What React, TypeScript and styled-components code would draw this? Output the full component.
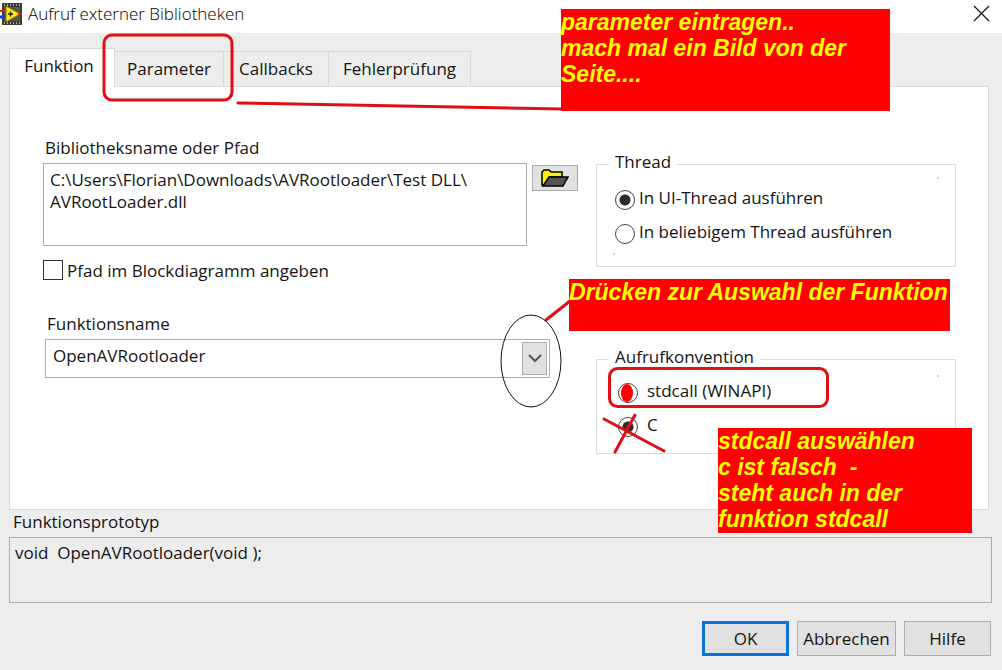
import React from 'react';
import styled, { createGlobalStyle } from 'styled-components';

const Global = createGlobalStyle`
  *, *::before, *::after { box-sizing: border-box; }
  body { margin: 0; background: #ededed; }
  body, button, input, select, textarea {
    font-family: 'Open Sans', 'Noto Sans', sans-serif;
    font-size: 17px;
    line-height: 22px;
    color: #141414;
  }
`;

const Dialog = styled.main`
  position: relative;
  min-height: 100vh;
  background: #ededed;
`;

const TitleBar = styled.header`
  display: flex;
  align-items: center;
  gap: 6px;
  height: 33px;
  padding: 0 12px 6px 0;
  background: #fff;
`;

const Title = styled.h1`
  flex: 1;
  margin: 0;
  font-size: 17px;
  font-weight: 300;
  color: #000;
`;

const CloseButton = styled.button`
  display: flex;
  padding: 0;
  border: 0;
  background: none;
`;

const Body = styled.div`
  padding: 15px 10px 0 9px;
`;

const TabList = styled.div`
  display: flex;
  align-items: flex-end;
  height: 38px;
`;

const Tab = styled.button<{ $active?: boolean; $width: number }>`
  position: relative;
  width: ${p => p.$width}px;
  height: ${p => (p.$active ? 39 : 35)}px;
  margin-bottom: ${p => (p.$active ? -1 : 0)}px;
  padding: ${p => (p.$active ? '0 6px 4px 0' : '0')};
  border: 1px solid #d9d9d9;
  border-bottom: 0;
  border-left-width: ${p => (p.$active ? 1 : 0)}px;
  background: ${p => (p.$active ? '#fff' : '#ededed')};
  white-space: nowrap;
  z-index: ${p => (p.$active ? 1 : 0)};
`;

const Panel = styled.section`
  display: grid;
  grid-template-columns: 543px minmax(0, 360px);
  column-gap: 10px;
  min-height: 424px;
  margin-right: 3px;
  padding: 49px 32px 54px 33px;
  border: 1px solid #d9d9d9;
  background: #fff;
`;

const LeftColumn = styled.div`
  display: flex;
  flex-direction: column;
`;

const RightColumn = styled.div`
  display: flex;
  flex-direction: column;
  gap: 79px;
  padding-top: 15px;
`;

const Label = styled.label`
  display: block;
  padding: 1px 2px;
  margin-bottom: 3px;
`;

const PathRow = styled.div`
  display: flex;
  align-items: flex-start;
  gap: 5px;
`;

const PathBox = styled.textarea`
  display: block;
  width: 484px;
  height: 83px;
  padding: 5px 6px;
  border: 1px solid #acacac;
  border-radius: 0;
  background: #fff;
  resize: none;
  overflow: hidden;
  outline: none;
`;

const BrowseButton = styled.button`
  display: flex;
  align-items: center;
  justify-content: center;
  width: 46px;
  height: 26px;
  margin-top: 2px;
  padding: 0;
  border: 1px solid #acacac;
  background: #e1e1e1;
`;

const CheckRow = styled.label`
  display: flex;
  align-items: center;
  gap: 4px;
  height: 24px;
  margin-top: 13px;
`;

const CheckBox = styled.input`
  appearance: none;
  width: 20px;
  height: 20px;
  margin: 0 0 2px;
  border: 1px solid #333;
  background: #fff;
`;

const FunctionField = styled.div`
  margin: 29px 0 0 2px;
`;

const SelectFrame = styled.div`
  display: grid;
  width: 505px;
  height: 39px;
  align-items: center;
  border: 1px solid #acacac;

  & > * { grid-area: 1 / 1; }
`;

const Select = styled.select`
  appearance: none;
  width: 100%;
  height: 37px;
  padding: 0 32px 6px 7px;
  border: 0;
  background: #fff;
  outline: none;
`;

const Arrow = styled.span`
  display: flex;
  align-items: center;
  justify-content: center;
  justify-self: end;
  width: 25px;
  height: 33px;
  margin-right: 2px;
  border: 1px solid #acacac;
  background: #e1e1e1;
  pointer-events: none;
`;

const Group = styled.fieldset<{ $height: number; $inset: number; $top: number }>`
  min-width: 0;
  height: ${p => p.$height}px;
  margin: 0;
  padding: ${p => p.$top}px 0 0 ${p => p.$inset}px;
  border: 1px solid #dcdcdc;

  legend {
    margin-left: ${p => 12 - p.$inset}px;
    padding: 0 6px 4px;
  }
`;

const RadioRow = styled.label<{ $gap: number }>`
  display: flex;
  align-items: center;
  gap: ${p => p.$gap}px;
  height: 24px;
  margin-bottom: 10px;
`;

const Radio = styled.input`
  appearance: none;
  width: 20px;
  height: 20px;
  margin: 3px 0 0;
  border: 1px solid #444;
  border-radius: 50%;
  background: #fff;

  &:checked { background: radial-gradient(circle, #2c2c2c 5px, #fff 6px); }
`;

const Prototype = styled.div`
  label { margin-bottom: 3px; padding: 1px 4px; }
`;

const PrototypeBox = styled.textarea`
  display: block;
  width: 100%;
  height: 66px;
  padding: 4px 5px;
  border: 1px solid #acacac;
  border-radius: 0;
  background: #ededed;
  resize: none;
  outline: none;
`;

const Footer = styled.footer`
  display: flex;
  justify-content: flex-end;
  gap: 8px;
  padding: 18px 1px 14px 0;
`;

const PushButton = styled.button<{ $primary?: boolean; $width: number }>`
  width: ${p => p.$width}px;
  height: 35px;
  padding: 0;
  border: ${p => (p.$primary ? '3px solid #0a74d6' : '1px solid #acacac')};
  background: #e1e1e1;
  white-space: nowrap;
`;

const Ink = styled.svg`
  position: absolute;
  top: 0;
  left: 0;
  z-index: 2;
  pointer-events: none;
`;

const Note = styled.p<{ $x: number; $y: number; $w: number; $h: number }>`
  position: absolute;
  left: ${p => p.$x}px;
  top: ${p => p.$y}px;
  z-index: 3;
  width: ${p => p.$w}px;
  height: ${p => p.$h}px;
  margin: 0;
  background: #f00;
  color: #ff0;
  font: italic bold 23px/26px 'Liberation Sans', Arial, sans-serif;
  white-space: pre;
`;

const AppIcon = () => (
  <svg width="22" height="22" viewBox="0 0 22 22" aria-hidden="true">
    <rect x="2" y="0" width="20" height="22" fill="#3b3d36" />
    <path d="M4 2h17M4 20h17" stroke="#a5a79b" strokeWidth="2" strokeDasharray="1 2" />
    <rect x="4" y="4" width="16" height="14" fill="#55584a" />
    <path d="M6 3v16l14-8z" fill="#ffe81a" stroke="#8a7a00" />
    <path d="M8 11h5M10.500 8.500v5" stroke="#222" strokeWidth="1.500" />
    <path d="M0 8h6" stroke="#e02020" strokeWidth="2" />
    <path d="M0 14h5" stroke="#2038d0" strokeWidth="3" />
    <path d="M18 11h4" stroke="#e02020" strokeWidth="2" />
  </svg>
);

const FolderIcon = () => (
  <svg width="28" height="18" viewBox="0 0 28 18" aria-hidden="true">
    <path d="M1 16V3l2-2h5l2 2h11v5H9l-6 8z" fill="#fff200" stroke="#000" strokeWidth="1.500" />
    <path d="M2 17L8 8h19l-5 9z" fill="#555" stroke="#000" strokeWidth="1.500" />
  </svg>
);

export default function App() {
  return (
    <Dialog>
      <Global />
      <TitleBar>
        <AppIcon />
        <Title>Aufruf externer Bibliotheken</Title>
        <CloseButton aria-label="Schließen">
          <svg width="17" height="17" viewBox="0 0 17 17">
            <path d="M1 1l15 15M16 1L1 16" stroke="#111" strokeWidth="1.200" />
          </svg>
        </CloseButton>
      </TitleBar>

      <Body>
        <TabList role="tablist">
          <Tab role="tab" aria-selected="true" $active $width={106}>Funktion</Tab>
          <Tab role="tab" $width={109}>Parameter</Tab>
          <Tab role="tab" $width={105}>Callbacks</Tab>
          <Tab role="tab" $width={142}>Fehlerprüfung</Tab>
        </TabList>

        <Panel role="tabpanel">
          <LeftColumn>
            <Label htmlFor="path">Bibliotheksname oder Pfad</Label>
            <PathRow>
              <PathBox
                id="path"
                spellCheck={false}
                defaultValue={'C:\\Users\\Florian\\Downloads\\AVRootloader\\Test DLL\\\nAVRootLoader.dll'}
              />
              <BrowseButton aria-label="Durchsuchen"><FolderIcon /></BrowseButton>
            </PathRow>
            <CheckRow>
              <CheckBox type="checkbox" />
              Pfad im Blockdiagramm angeben
            </CheckRow>
            <FunctionField>
              <Label htmlFor="fn">Funktionsname</Label>
              <SelectFrame>
                <Select id="fn" defaultValue="OpenAVRootloader">
                  <option>OpenAVRootloader</option>
                </Select>
                <Arrow>
                  <svg width="14" height="9" viewBox="0 0 14 9" aria-hidden="true">
                    <path d="M1 1l6 6 6-6" fill="none" stroke="#555" strokeWidth="2" />
                  </svg>
                </Arrow>
              </SelectFrame>
            </FunctionField>
          </LeftColumn>

          <RightColumn>
            <Group $height={116} $inset={18} $top={9}>
              <legend>Thread</legend>
              <RadioRow $gap={4}>
                <Radio type="radio" name="thread" defaultChecked />
                In UI-Thread ausführen
              </RadioRow>
              <RadioRow $gap={4}>
                <Radio type="radio" name="thread" />
                In beliebigem Thread ausführen
              </RadioRow>
            </Group>
            <Group $height={108} $inset={21} $top={7}>
              <legend>Aufrufkonvention</legend>
              <RadioRow $gap={9}>
                <Radio type="radio" name="convention" />
                stdcall (WINAPI)
              </RadioRow>
              <RadioRow $gap={9}>
                <Radio type="radio" name="convention" defaultChecked />
                C
              </RadioRow>
            </Group>
          </RightColumn>
        </Panel>

        <Prototype>
          <Label htmlFor="prototype">Funktionsprototyp</Label>
          <PrototypeBox id="prototype" readOnly spellCheck={false} value="void  OpenAVRootloader(void );" />
        </Prototype>

        <Footer>
          <PushButton $primary $width={87}>OK</PushButton>
          <PushButton $width={99}>Abbrechen</PushButton>
          <PushButton $width={87}>Hilfe</PushButton>
        </Footer>
      </Body>

      <Ink width="1002" height="670" viewBox="0 0 1002 670" aria-hidden="true">
        <g fill="none" stroke="#df0f14" strokeWidth="3" strokeLinecap="round">
          <rect x="104" y="35" width="128" height="65" rx="8" />
          <path d="M238 103L562 109" />
          <path d="M546 320L570 301" />
          <rect x="609.500" y="368.500" width="218" height="38" rx="8" />
          <path d="M604 419L664 451M635 415L615 452" />
        </g>
        <ellipse cx="627" cy="393" rx="6" ry="9" fill="#f00" />
        <ellipse cx="531" cy="361" rx="30" ry="46" fill="none" stroke="#111" />
        <path d="M937 178h2M613 254h2M937 376h2" stroke="#aaa" />
      </Ink>
      <Note $x={561} $y={9} $w={329} $h={102}>{'parameter eintragen..\nmach mal ein Bild von der\nSeite....'}</Note>
      <Note $x={569} $y={279} $w={381} $h={52}>Drücken zur Auswahl der Funktion</Note>
      <Note $x={718} $y={428} $w={254} $h={105}>{'stdcall auswählen\nc ist falsch  -\nsteht auch in der\nfunktion stdcall'}</Note>
    </Dialog>
  );
}
